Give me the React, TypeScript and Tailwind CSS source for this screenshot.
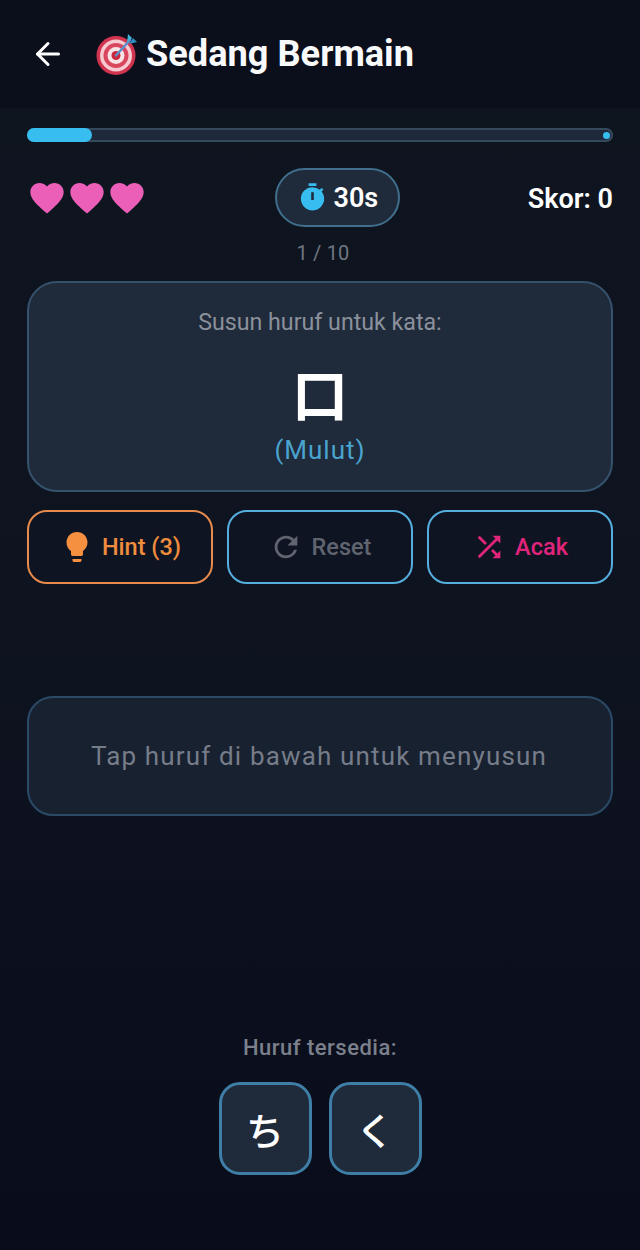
import { ArrowLeft } from 'lucide-react'
import { MdFavorite, MdLightbulb, MdRefresh, MdShuffle, MdTimer } from 'react-icons/md'

// Dartboard emoji next to the screen title
function TargetIcon() {
  return (
    <svg viewBox="0 0 42 42" className="w-[42px] h-[42px] shrink-0">
      <circle cx="20" cy="22.5" r="19.5" fill="#d1344f" />
      <circle cx="20" cy="22.5" r="16" fill="#f7c9d0" />
      <circle cx="20" cy="22.5" r="12.5" fill="#d9475f" />
      <circle cx="20" cy="22.5" r="8.5" fill="#f8e3e6" />
      <circle cx="20" cy="22.5" r="4.5" fill="#c9283f" />
      <path d="M20 22.5 L34 7" stroke="#5b8fc9" strokeWidth="2.5" strokeLinecap="round" />
      <path d="M31 10 L32 1 L36 5 Z" fill="#3fb4d8" />
      <path d="M33 11 L41 9 L37 5 Z" fill="#2f8fc0" />
    </svg>
  )
}

function ActionButton({
  icon,
  label,
  className,
}: {
  icon: React.ReactNode
  label: string
  className: string
}) {
  return (
    <button
      className={`flex-1 h-[74px] rounded-[20px] border-2 bg-[#0f1422] flex items-center justify-center text-[23.5px] font-medium ${className}`}
    >
      {icon}
      <span className="pt-[2px]">{label}</span>
    </button>
  )
}

function LetterTile({ letter }: { letter: string }) {
  return (
    <button className="w-[93px] h-[93px] rounded-[21px] border-[3px] border-[#3f7ea6] bg-[#1f2a3a] flex items-center justify-center pt-[8px] text-[38px] font-medium text-white">
      {letter}
    </button>
  )
}

export default function App() {
  return (
    <div className="w-[640px] h-[1250px] flex flex-col bg-[#0b0e1b] font-['Roboto','Noto_Sans_CJK_JP',sans-serif]">
      <header className="h-[108px] flex items-center pl-[30px]">
        <ArrowLeft className="w-[36px] h-[36px] text-white" strokeWidth={2} />
        <div className="ml-[30px] flex items-center gap-[8px]">
          <TargetIcon />
          <h1 className="text-[36.2px] font-bold text-[#f8f9fb] leading-none">Sedang Bermain</h1>
        </div>
      </header>

      <main className="flex-1 flex flex-col px-[27px] pt-[20px] pb-[75px] bg-gradient-to-b from-[#0f151f] via-[#0e1320] to-[#090c1b]">
        <div className="h-[14px] rounded-full bg-[#1e2a3b] shadow-[inset_0_0_0_2px_#35495e] flex items-center justify-between">
          <div className="w-[65px] h-[14px] rounded-full bg-[#38bdf0]" />
          <div className="w-[7px] h-[7px] mr-[3px] rounded-full bg-[#38bdf0]" />
        </div>

        <div className="mt-[26px] h-[59px] flex items-center justify-between">
          <div className="flex items-center pt-[1px]">
            <MdFavorite className="w-[40px] h-[40px] text-[#ec5fb8]" />
            <MdFavorite className="w-[40px] h-[40px] text-[#ec5fb8]" />
            <MdFavorite className="w-[40px] h-[40px] text-[#ec5fb8]" />
          </div>
          <div className="w-[125px] h-[59px] rounded-full border-2 border-[#3f6f8c] bg-[#1f2a3a] flex items-center justify-center gap-[6px]">
            <MdTimer className="w-[31px] h-[31px] text-[#38bdf0]" />
            <span className="pt-[2px] text-[27px] font-semibold text-white">30s</span>
          </div>
          <span className="pt-[4px] text-[27px] font-semibold text-white">Skor: 0</span>
        </div>

        <p className="mt-[14px] pl-[6px] text-center text-[20px] leading-[24px] tracking-[0.2px] text-[#6f7683]">1 / 10</p>

        <section className="mt-[16px] h-[211px] rounded-[30px] border-2 border-[#35526c] bg-[#1f2a3a] flex flex-col items-center">
          <p className="mt-[26px] text-[23.2px] leading-[26px] text-[#8b919c]">Susun huruf untuk kata:</p>
          <p className="mt-[21px] text-[56px] leading-[72px] text-white font-['Noto_Sans_CJK_JP',sans-serif] font-bold">口</p>
          <p className="mt-[7px] text-[26px] leading-[30px] tracking-[1px] text-[#4aa3cf]">(Mulut)</p>
        </section>

        <div className="mt-[18px] flex gap-[14px]">
          <ActionButton
            className="gap-[7px] border-[#e78a4b] text-[#f08c3e]"
            icon={<MdLightbulb className="w-[36px] h-[36px] text-[#f4903f]" />}
            label="Hint (3)"
          />
          <ActionButton
            className="gap-[9px] border-[#56aede] text-[#5f646f]"
            icon={<MdRefresh className="w-[34px] h-[34px] text-[#5f646f]" />}
            label="Reset"
          />
          <ActionButton
            className="gap-[9px] border-[#56aede] text-[#e0247a]"
            icon={<MdShuffle className="w-[34px] h-[34px] text-[#e0247a]" />}
            label="Acak"
          />
        </div>

        <section className="mt-[112px] h-[120px] rounded-[26px] border-2 border-[#2b4a66] bg-[#182130] flex items-center justify-center">
          <p className="pr-[2px] text-[26px] tracking-[1.15px] text-[#767c88]">Tap huruf di bawah untuk menyusun</p>
        </section>

        <div className="mt-auto flex flex-col items-center">
          <p className="text-[22px] leading-[26px] font-medium tracking-[0.5px] text-[#7b808c]">Huruf tersedia:</p>
          <div className="mt-[21px] flex gap-[17px]">
            <LetterTile letter="ち" />
            <LetterTile letter="く" />
          </div>
        </div>
      </main>
    </div>
  )
}
